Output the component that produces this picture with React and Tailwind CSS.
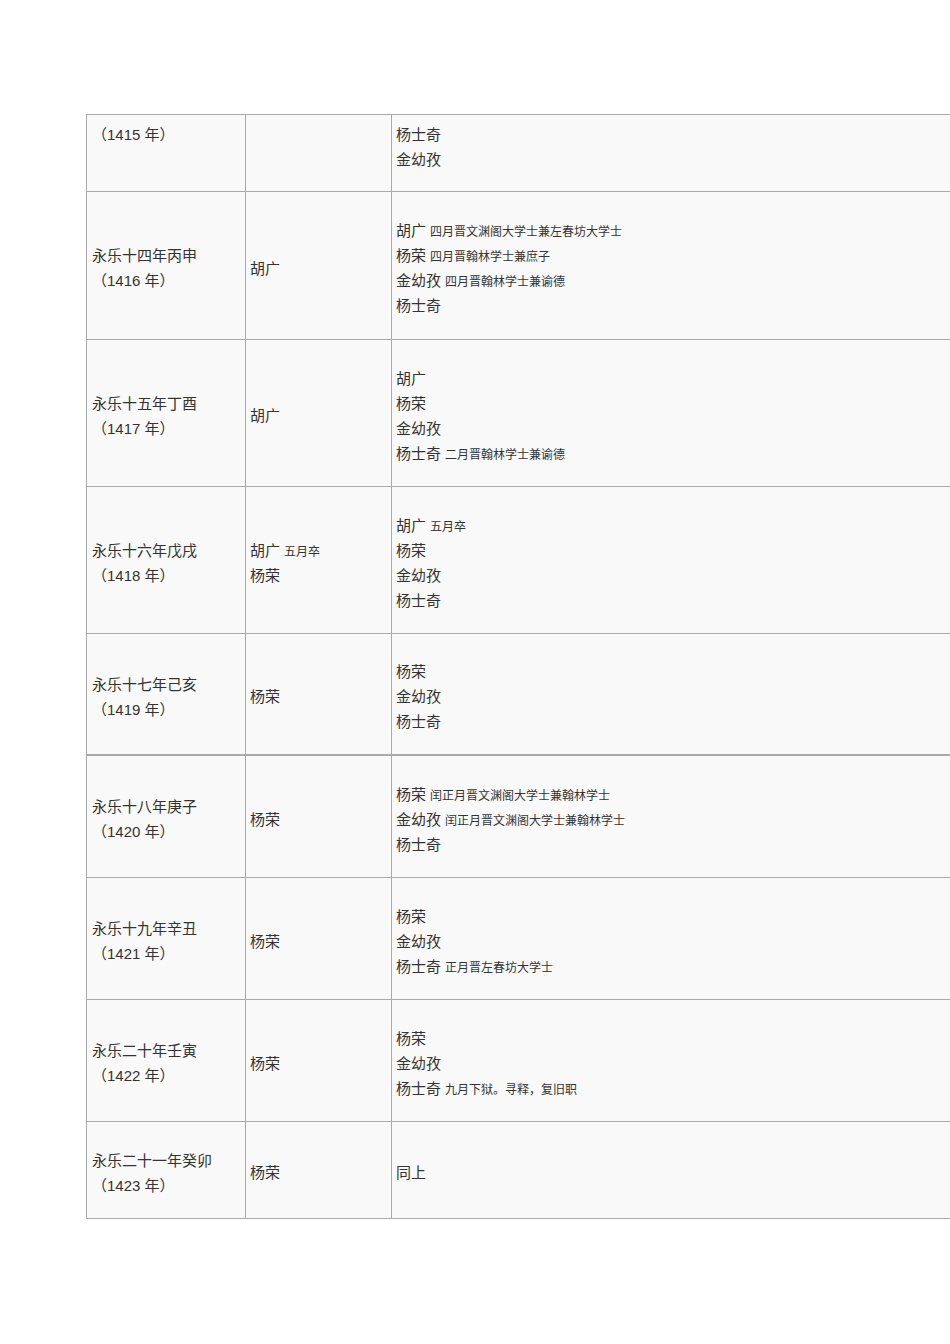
import React from "react";

const rows = [
  {
    h: "h-[77px]",
    top: true,
    year: ["（1415 年）"],
    chief: [],
    members: [["杨士奇"], ["金幼孜"]],
  },
  {
    h: "h-[148px]",
    year: ["永乐十四年丙申", "（1416 年）"],
    chief: [["胡广"]],
    members: [
      ["胡广", "四月晋文渊阁大学士兼左春坊大学士"],
      ["杨荣", "四月晋翰林学士兼庶子"],
      ["金幼孜", "四月晋翰林学士兼谕德"],
      ["杨士奇"],
    ],
  },
  {
    h: "h-[147px]",
    year: ["永乐十五年丁酉", "（1417 年）"],
    chief: [["胡广"]],
    members: [["胡广"], ["杨荣"], ["金幼孜"], ["杨士奇", "二月晋翰林学士兼谕德"]],
  },
  {
    h: "h-[147px]",
    year: ["永乐十六年戊戌", "（1418 年）"],
    chief: [["胡广", "五月卒"], ["杨荣"]],
    members: [["胡广", "五月卒"], ["杨荣"], ["金幼孜"], ["杨士奇"]],
  },
  {
    h: "h-[122px]",
    thick: true,
    year: ["永乐十七年己亥", "（1419 年）"],
    chief: [["杨荣"]],
    members: [["杨荣"], ["金幼孜"], ["杨士奇"]],
  },
  {
    h: "h-[122px]",
    year: ["永乐十八年庚子", "（1420 年）"],
    chief: [["杨荣"]],
    members: [
      ["杨荣", "闰正月晋文渊阁大学士兼翰林学士"],
      ["金幼孜", "闰正月晋文渊阁大学士兼翰林学士"],
      ["杨士奇"],
    ],
  },
  {
    h: "h-[122px]",
    year: ["永乐十九年辛丑", "（1421 年）"],
    chief: [["杨荣"]],
    members: [["杨荣"], ["金幼孜"], ["杨士奇", "正月晋左春坊大学士"]],
  },
  {
    h: "h-[122px]",
    year: ["永乐二十年壬寅", "（1422 年）"],
    chief: [["杨荣"]],
    members: [["杨荣"], ["金幼孜"], ["杨士奇", "九月下狱。寻释，复旧职"]],
  },
  {
    h: "h-[97px]",
    year: ["永乐二十一年癸卯", "（1423 年）"],
    chief: [["杨荣"]],
    members: [["同上"]],
  },
];

function Lines({ items }) {
  return (
    <div className="flex flex-col">
      {items.map((it, i) => (
        <div key={i} className="h-[25px] leading-[25px] whitespace-nowrap">
          <span className="text-[15px]">{it[0]}</span>
          {it[1] && <span className="text-[12px] leading-none ml-[4px]">{it[1]}</span>}
        </div>
      ))}
    </div>
  );
}

export default function App() {
  return (
    <div
      className="w-[950px] h-[1344px] overflow-hidden bg-white text-[#333]"
      style={{ fontFamily: '"Liberation Sans", "Noto Sans CJK SC", sans-serif' }}
    >
      <div className="pt-[114px] pl-[86px]">
        <div className="w-[900px] border-t border-l border-[#aaa] bg-[#f9f9f9]">
          {rows.map((r, i) => (
            <div
              key={i}
              className={`flex ${r.h} border-[#aaa] ${r.thick ? "border-b-2" : "border-b"}`}
            >
              <div
                className={`w-[159px] flex border-r border-[#aaa] pl-[5px] ${
                  r.top ? "items-start pt-[7px]" : "items-center pt-[5px]"
                }`}
              >
                <div className="flex flex-col text-[15px] leading-[25px]">
                  {r.year.map((t, j) => (
                    <div key={j}>{t}</div>
                  ))}
                </div>
              </div>
              <div
                className={`w-[146px] flex border-r border-[#aaa] pl-[4px] ${
                  r.top ? "items-start pt-[7px]" : "items-center pt-[5px]"
                }`}
              >
                <Lines items={r.chief} />
              </div>
              <div
                className={`flex-1 flex pl-[4px] ${
                  r.top ? "items-start pt-[7px]" : "items-center pt-[5px]"
                }`}
              >
                <Lines items={r.members} />
              </div>
            </div>
          ))}
        </div>
      </div>
    </div>
  );
}
